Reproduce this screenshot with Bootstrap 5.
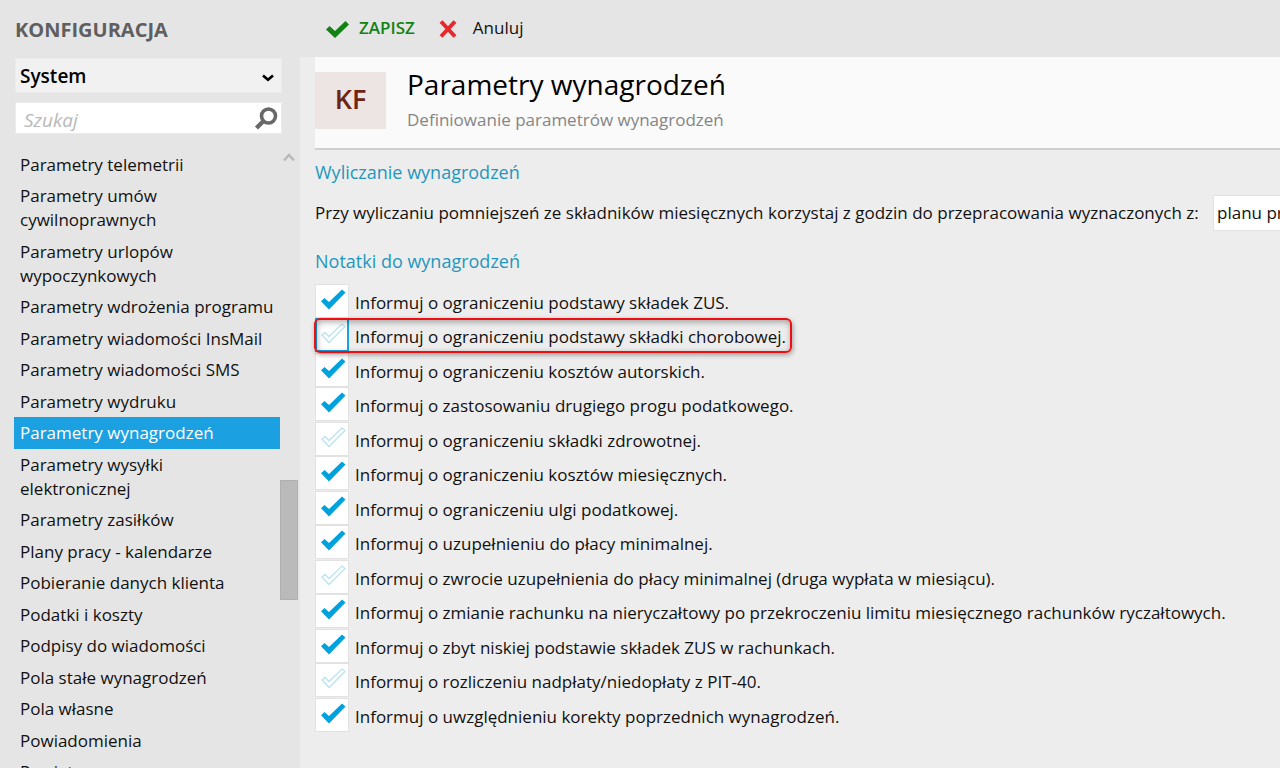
<!DOCTYPE html>
<html lang="pl">
<head>
<meta charset="utf-8">
<meta name="viewport" content="width=device-width, initial-scale=1">
<title>Konfiguracja – Parametry wynagrodzeń</title>
<link href="https://cdn.jsdelivr.net/npm/bootstrap@5.3.0/dist/css/bootstrap.min.css" rel="stylesheet">
<style>
  body { font-family: "Open Sans", "Noto Sans", sans-serif; font-size: 17px; line-height: 24px; color: #111; background: #ededed; }
  .side { width: 300px; background: #e5e5e5; }
  .side-title { font-size: 20px; line-height: 24px; font-weight: 700; color: #5f5f5f; margin: 18px 0 16px 15px; }
  .area-select { width: 267px; height: 36px; margin-left: 15px; padding: 2px 4px 0; border: 1px solid #ebebeb; border-radius: 0; font-size: 19px; font-weight: 600; color: #000;
    background: #f1f1f1 url("data:image/svg+xml,%3Csvg xmlns='http://www.w3.org/2000/svg' viewBox='0 0 12 8'%3E%3Cpath d='M1 1.5 6 5.8 11 1.5' fill='none' stroke='%23000' stroke-width='2.6'/%3E%3C/svg%3E") no-repeat right 7px top 15px / 12px 8px; }
  .find { width: 267px; margin: 9px 0 0 15px; background: #fff; border: 1px solid #ebebeb; height: 33px; }
  .find input { font-size: 19px; font-style: italic; padding: 4px 8px 0; border: 0; background: none; min-width: 0; outline: 0; }
  .find input::placeholder { color: #b9b9b9; opacity: 1; }
  .find button { padding: 0 3px; line-height: 1; }
  .menu-area { margin-top: 15px; min-height: 0; }
  .menu-list { width: 280px; padding-left: 14px; }
  .menu-list a { padding: 4px 6px 3px; color: #111; text-decoration: none; display: block; }
  .menu-list li:nth-child(even) a { padding-bottom: 4px; }
  .menu-list a.active { background: #1ba1e2; color: #fff; }
  .track { width: 18px; }
  .track-up { display: block; margin: 4px auto 0 3px; }
  .thumb { top: 53.4%; height: 120px; left: 0; right: 0; background: #bababa; border: 1px solid #b0b0b0; }
  .tools { height: 57px; background: #e5e5e5; padding: 0 0 2px 26px; gap: 24px; }
  .tools .btn { font-size: 17px; line-height: 24px; padding: 0; border: 0; color: #111; }
  .tools .save { color: #128212; font-weight: 600; }
  .tools svg { margin-top: 2px; }
  .head { margin-left: 15px; height: 93px; background: #fafafa; border-bottom: 2px solid #d0d0d0; padding-top: 7px; }
  .tile { width: 71px; height: 57px; margin-top: 8px; background: #ede5e4; color: #6e2413; font-size: 27px; line-height: 54px; font-weight: 600; text-align: center; }
  .head-text { padding-left: 21px; }
  .head h1 { font-size: 28px; line-height: 40px; font-weight: 400; color: #000; }
  .head p { line-height: 32px; color: #858585; }
  .sheet { padding: 10px 0 0 15px; }
  .sheet h2 { font-size: 18px; line-height: 24px; font-weight: 400; color: #1f97be; }
  .plan { margin: 11px 0 18px; }
  .plan label { min-width: 890px; }
  .plan select { width: 260px; height: 36px; padding: 0 3px; border: 1px solid #e2e2e2; border-radius: 0; font-size: 17px; background: #fff; color: #111; }
  .notes { margin-top: 11px; }
  .note { height: 34px; }
  .note:nth-child(even) { margin-bottom: 1px; }
  .note label { padding: 7px 0 0 6px; }
  .tick { appearance: none; width: 34px; height: 34px; margin: 0; border: 1px solid #e2e2e2;
    background: #fff url("data:image/svg+xml,%3Csvg xmlns='http://www.w3.org/2000/svg' viewBox='0 0 34 34'%3E%3Cpath d='M7 17 10 14.5 14 18.500 27 6 30 8.500 14 24.500Z' fill='%23fff' stroke='%23b9e3f3' stroke-width='1.3'/%3E%3C/svg%3E") no-repeat center / 34px 34px; background-origin: border-box; }
  .tick:checked { background-image: url("data:image/svg+xml,%3Csvg xmlns='http://www.w3.org/2000/svg' viewBox='0 0 34 34'%3E%3Cpath d='M6 17.200 9.500 14 14 18 27 5.500 30.500 8.500 14 25.500Z' fill='%2300a2dd'/%3E%3C/svg%3E"); }
  .tick.current { border-color: #1ba1e2; border-width: 2px; }
  .callout { inset: 0 -6px -1px -1px; border: 2px solid #ee1010; border-radius: 6px; box-shadow: 1px 2px 5px #0005, inset 1px 2px 6px #0005; pointer-events: none; }
</style>
</head>
<body>
<div class="d-flex vh-100 overflow-hidden">
  <aside class="side d-flex flex-column flex-shrink-0">
    <h2 class="side-title">KONFIGURACJA</h2>
    <select class="area-select form-select" aria-label="Obszar"><option>System</option></select>
    <div class="find d-flex align-items-center">
      <input class="flex-grow-1" type="search" placeholder="Szukaj" aria-label="Szukaj">
      <button class="btn border-0" type="button" aria-label="Znajdź">
        <svg class="d-block" width="24" height="25" viewBox="0 0 24 25"><circle cx="14.500" cy="10" r="7" fill="none" stroke="#686868" stroke-width="3.600"/><path d="M10 14.500 2.500 22" stroke="#686868" stroke-width="4.500"/></svg>
      </button>
    </div>
    <div class="menu-area d-flex flex-grow-1">
      <ul class="menu-list list-unstyled m-0 overflow-hidden">
        <li><a href="#">Parametry telemetrii</a></li>
        <li><a href="#">Parametry umów<br>cywilnoprawnych</a></li>
        <li><a href="#">Parametry urlopów<br>wypoczynkowych</a></li>
        <li><a href="#">Parametry wdrożenia programu</a></li>
        <li><a href="#">Parametry wiadomości InsMail</a></li>
        <li><a href="#">Parametry wiadomości SMS</a></li>
        <li><a href="#">Parametry wydruku</a></li>
        <li><a href="#" class="active" aria-current="page">Parametry wynagrodzeń</a></li>
        <li><a href="#">Parametry wysyłki<br>elektronicznej</a></li>
        <li><a href="#">Parametry zasiłków</a></li>
        <li><a href="#">Plany pracy - kalendarze</a></li>
        <li><a href="#">Pobieranie danych klienta</a></li>
        <li><a href="#">Podatki i koszty</a></li>
        <li><a href="#">Podpisy do wiadomości</a></li>
        <li><a href="#">Pola stałe wynagrodzeń</a></li>
        <li><a href="#">Pola własne</a></li>
        <li><a href="#">Powiadomienia</a></li>
        <li><a href="#">Powiaty</a></li>
      </ul>
      <div class="track position-relative">
        <svg class="track-up" width="12" height="9" viewBox="0 0 12 9"><path d="M1 7.500 6 2 11 7.500" fill="none" stroke="#b9b9b9" stroke-width="2.500"/></svg>
        <div class="thumb position-absolute"></div>
      </div>
    </div>
  </aside>

  <main class="flex-grow-1 overflow-hidden">
    <div class="tools d-flex align-items-center">
      <button class="btn save d-flex align-items-center" type="button">
        <svg class="me-2" width="25" height="20" viewBox="0 0 25 20"><path d="M0 10.500 3.500 7 9 12 19.500 2 23 5.500 9 19Z" fill="#128212"/></svg>ZAPISZ
      </button>
      <button class="btn d-flex align-items-center" type="button">
        <svg class="me-3" width="18" height="18" viewBox="0 0 18 18"><path d="M2 1.500 16 16.500M16 1.500 2 16.500" stroke="#e6282d" stroke-width="4"/></svg>Anuluj
      </button>
    </div>
    <header class="head d-flex">
      <div class="tile flex-shrink-0">KF</div>
      <div class="head-text">
        <h1 class="m-0">Parametry wynagrodzeń</h1>
        <p class="m-0">Definiowanie parametrów wynagrodzeń</p>
      </div>
    </header>
    <div class="sheet">
      <h2 class="m-0">Wyliczanie wynagrodzeń</h2>
      <div class="plan d-flex align-items-center text-nowrap">
        <label for="plan" class="me-2">Przy wyliczaniu pomniejszeń ze składników miesięcznych korzystaj z godzin do przepracowania wyznaczonych z:</label>
        <select id="plan" class="form-select flex-shrink-0"><option>planu pracy</option></select>
      </div>
      <h2 class="m-0">Notatki do wynagrodzeń</h2>
      <div class="notes d-flex flex-column align-items-start">
        <div class="note d-flex"><input class="tick" type="checkbox" id="n1" checked><label for="n1">Informuj o ograniczeniu podstawy składek ZUS.</label></div>
        <div class="note d-flex position-relative"><input class="tick current" type="checkbox" id="n2"><label for="n2">Informuj o ograniczeniu podstawy składki chorobowej.</label><span class="callout position-absolute"></span></div>
        <div class="note d-flex"><input class="tick" type="checkbox" id="n3" checked><label for="n3">Informuj o ograniczeniu kosztów autorskich.</label></div>
        <div class="note d-flex"><input class="tick" type="checkbox" id="n4" checked><label for="n4">Informuj o zastosowaniu drugiego progu podatkowego.</label></div>
        <div class="note d-flex"><input class="tick" type="checkbox" id="n5"><label for="n5">Informuj o ograniczeniu składki zdrowotnej.</label></div>
        <div class="note d-flex"><input class="tick" type="checkbox" id="n6" checked><label for="n6">Informuj o ograniczeniu kosztów miesięcznych.</label></div>
        <div class="note d-flex"><input class="tick" type="checkbox" id="n7" checked><label for="n7">Informuj o ograniczeniu ulgi podatkowej.</label></div>
        <div class="note d-flex"><input class="tick" type="checkbox" id="n8" checked><label for="n8">Informuj o uzupełnieniu do płacy minimalnej.</label></div>
        <div class="note d-flex"><input class="tick" type="checkbox" id="n9"><label for="n9">Informuj o zwrocie uzupełnienia do płacy minimalnej (druga wypłata w miesiącu).</label></div>
        <div class="note d-flex"><input class="tick" type="checkbox" id="n10" checked><label for="n10">Informuj o zmianie rachunku na nieryczałtowy po przekroczeniu limitu miesięcznego rachunków ryczałtowych.</label></div>
        <div class="note d-flex"><input class="tick" type="checkbox" id="n11" checked><label for="n11">Informuj o zbyt niskiej podstawie składek ZUS w rachunkach.</label></div>
        <div class="note d-flex"><input class="tick" type="checkbox" id="n12"><label for="n12">Informuj o rozliczeniu nadpłaty/niedopłaty z PIT-40.</label></div>
        <div class="note d-flex"><input class="tick" type="checkbox" id="n13" checked><label for="n13">Informuj o uwzględnieniu korekty poprzednich wynagrodzeń.</label></div>
      </div>
    </div>
  </main>
</div>
<script src="https://cdn.jsdelivr.net/npm/bootstrap@5.3.0/dist/js/bootstrap.bundle.min.js"></script>
</body>
</html>
